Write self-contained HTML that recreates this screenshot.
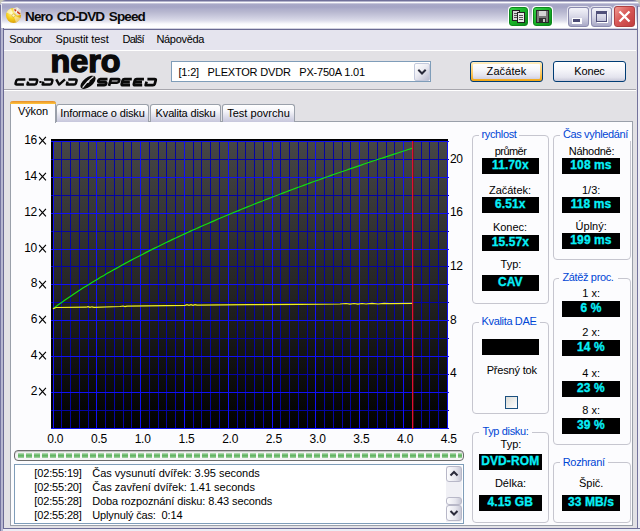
<!DOCTYPE html>
<html>
<head>
<meta charset="utf-8">
<title>Nero CD-DVD Speed</title>
<style>
*{box-sizing:border-box;margin:0;padding:0}
html,body{width:640px;height:531px;overflow:hidden;background:#e2e1e5}
body{font-family:"Liberation Sans",sans-serif;font-size:11px;color:#000;position:relative;letter-spacing:-0.15px}
.abs{position:absolute}
.t{position:absolute;white-space:nowrap}
#win{position:absolute;left:0;top:0;width:640px;height:531px;background:#e2e1e5;overflow:hidden}
/* title bar */
#title{position:absolute;left:0;top:0;width:640px;height:30px;border-radius:6px 7px 0 0;
 background:linear-gradient(to bottom,#70709a 0px,#70709a 1px,#b4b4cc 1px,#b4b4cc 2px,#fafafd 2px,#fafafd 3px,#c6c6da 3px,#c6c6da 4px,#a9a9c8 4px,#a5a5c5 7px,#aeaecb 9px,#b8b8d0 12px,#c8c8dc 16px,#d9d9e8 20px,#e9e9f2 22px,#fbfbfd 24px,#ffffff 27px,#ffffff 28px,#d2d2e0 28px,#d2d2e0 29px,#6a6a92 29px,#6a6a92 30px)}
#tcorner{position:absolute;left:0;top:0;width:640px;height:8px;background:#c4c4b8}
#tl{position:absolute;left:0;top:5px;width:1px;height:24px;background:#70709a}
#tl2{position:absolute;left:1px;top:4px;width:1px;height:24px;background:#ececf4}
#tr{position:absolute;left:637px;top:6px;width:1px;height:24px;background:#74749c}
#tr2{position:absolute;left:638px;top:7px;width:2px;height:24px;background:#ececf4}
#ttext{position:absolute;left:25px;top:9px;font-weight:bold;font-size:13.5px;letter-spacing:-0.85px;word-spacing:1.6px;white-space:nowrap;color:#0a0a0a;line-height:16px}
/* frame borders */
#bl{position:absolute;left:0;top:28px;width:4px;height:503px;background:linear-gradient(to right,#7474a0 0,#7474a0 1px,#b6b6d0 1px,#b6b6d0 3px,#6a6a94 3px,#6a6a94 4px)}
#br{position:absolute;left:637px;top:28px;width:3px;height:503px;background:linear-gradient(to right,#74749c 0,#74749c 1px,#ececf4 1px,#ececf4 3px)}
#bb{position:absolute;left:3px;top:528px;width:637px;height:3px;background:linear-gradient(to bottom,#6e6e98 0,#6e6e98 1px,#ececf4 1px,#ececf4 3px)}
/* menu */
#menu{position:absolute;left:4px;top:30px;width:632px;height:20px;background:#e5e4ee}
#menu span{position:absolute;top:3px;font-size:11px;white-space:nowrap}
#mline{position:absolute;left:4px;top:50px;width:632px;height:1px;background:#fff}
#sep{position:absolute;left:4px;top:89px;width:632px;height:2px;border-top:1px solid #a7a6ad;border-bottom:1px solid #fff}
/* combo */
#combo{position:absolute;left:171px;top:61px;width:260px;height:21px;border:1px solid #7f9db9;background:#fff}
#combo .tx{position:absolute;left:6.5px;top:4px;white-space:pre;letter-spacing:-0.19px}
#drop{position:absolute;left:242px;top:0.5px;width:16px;height:18px;border-radius:2px;border:1px solid #c3c9dc;
 background:linear-gradient(135deg,#ffffff 0,#ececf3 45%,#bcbcd0 100%)}
/* buttons */
.btn{position:absolute;top:61px;width:73px;height:21px;border:1px solid #003c74;border-radius:3px;
 background:linear-gradient(to bottom,#ffffff 0,#f6f6fa 40%,#e4e4ee 80%,#c8c8d8 100%);text-align:center;line-height:19px}
#b1{left:470px;background:linear-gradient(to bottom,#ffefc6 0,#fddc92 25%,#fbc862 60%,#f0a514 100%);letter-spacing:0.1px}
#b1 i{position:absolute;left:2px;top:2px;right:2px;bottom:2px;border-radius:1px;background:linear-gradient(to bottom,#ffffff 0,#f6f6fa 40%,#e2e2ee 80%,#cfcfe2 100%)}
#b1 span{position:relative}
#b2{left:553px}
/* tabs */
.tab{position:absolute;top:104px;height:18px;border:1px solid #9aa0aa;border-bottom:none;border-radius:3px 3px 0 0;
 background:linear-gradient(to bottom,#ffffff 0,#f6f6fa 35%,#dcdce9 70%,#c6c6dc 100%);text-align:center;line-height:16px;white-space:nowrap}
#tab0{top:101px;height:22px;left:10px;width:46px;background:#fcfcfe;border-top:none;line-height:20px;z-index:3}
#tab0:before{content:"";position:absolute;left:-1px;top:0;width:46px;height:3px;border-radius:3px 3px 0 0;background:linear-gradient(to bottom,#e68b2c 0,#ffc73c 100%)}
#pane{position:absolute;left:10px;top:121px;width:623px;height:405px;border:1px solid #9aa0aa;background:#fcfcfe}
/* chart labels */
.yl{text-align:right;font-size:12px;letter-spacing:-0.3px}
.yl .X{font-size:11px;margin-left:1px}
.xl{text-align:center;font-size:12px;letter-spacing:-0.2px}
.rl{font-size:12px;letter-spacing:-0.3px}
/* groups */
.grp{position:absolute;border:1px solid #c6c6cf;border-radius:4px}
.gt{position:absolute;height:13px;background:#fcfcfe;color:#0046d5;text-align:center;white-space:nowrap;line-height:13px;letter-spacing:-0.35px}
.lb{text-align:center;line-height:13px;height:13px}
.bx{position:absolute;height:16px;background:#000;color:#08f0f8;font-weight:bold;font-size:12px;-webkit-text-stroke:0.3px #08f0f8;text-align:center;line-height:15px;letter-spacing:0.1px;white-space:nowrap}
.chk{position:absolute;width:13px;height:13px;border:1px solid #1c5180;background:linear-gradient(135deg,#dcdcd7,#fff)}
/* progress */
#prog{position:absolute;left:14px;top:450px;width:450px;height:11px;border:1px solid #6c6c6c;border-radius:4px;background:#f4f4f4;
 box-shadow:inset 0 1px 1px #c0c0c0}
#prog i{position:absolute;left:3px;top:1.5px;width:444px;height:5.6px;
 background:repeating-linear-gradient(to right,#62b462 0,#62b462 6px,#f4f4f4 6px,#f4f4f4 8px)}
#prog i:after{content:"";position:absolute;left:0;top:0;width:100%;height:100%;background:linear-gradient(to bottom,rgba(255,255,255,.6) 0,rgba(255,255,255,.25) 25%,rgba(255,255,255,0) 45%,rgba(255,255,255,0) 60%,rgba(255,255,255,.45) 100%)}
/* log */
#log{position:absolute;left:14px;top:464px;width:450px;height:60px;border:1px solid #7f9db9;background:#fff}
#log .ln{position:absolute;left:19.3px;white-space:pre;height:14px;line-height:14px}
#log .ln b{font-weight:normal;position:absolute;left:58px}
.sb{position:absolute;left:431px;width:16px;height:16px;border:1px solid #b8b8c8;border-radius:3px;background:linear-gradient(to right,#fdfdfe 0,#e6e6ee 60%,#c8c8d6 100%)}
#sbt{position:absolute;left:431px;top:1px;width:16px;height:56px;background:#f0f0f5}
</style>
</head>
<body>
<div id="win">
 <div id="tcorner"></div><div id="title"></div><div id="tl"></div><div id="tl2"></div><div id="tr"></div><div id="tr2"></div>
 <svg class="abs" style="left:5px;top:6px" width="18" height="18" viewBox="0 0 18 18">
  <defs><radialGradient id="dg" cx="40%" cy="35%" r="70%"><stop offset="0" stop-color="#fff8a0"/><stop offset="0.5" stop-color="#f6d020"/><stop offset="1" stop-color="#d89a08"/></radialGradient></defs>
  <circle cx="8.5" cy="9.5" r="7.5" fill="url(#dg)"/>
  <path d="M8.5 9.5 L1.5 6.5 A7.5 7.5 0 0 1 6 2.4 Z" fill="#fff" opacity=".55"/>
  <path d="M8.5 9.5 L15.6 12 A7.5 7.5 0 0 1 11 16.6 Z" fill="#fff" opacity=".45"/>
  <circle cx="8.5" cy="9.5" r="1.6" fill="#fdf6c8" stroke="#c89010" stroke-width=".5"/>
  <path d="M8 2.5 L12 1 L16 4 L15.5 9 L12 9.5 L9 6 Z" fill="#e8e0d8" opacity=".9"/>
  <path d="M9.5 3.5 L15 8" stroke="#d03010" stroke-width="1.6"/>
  <path d="M13 2 L11 7" stroke="#f4f4f4" stroke-width="1.2"/>
 </svg>
 <div id="ttext">Nero CD-DVD Speed</div>
 <!-- green buttons -->
 <div class="abs" style="left:508px;top:6px;width:21px;height:21px;border-radius:4px;background:#fff"></div>
 <div class="abs" style="left:532px;top:6px;width:21px;height:21px;border-radius:4px;background:#fff"></div>
 <div class="abs" style="left:509px;top:7px;width:19px;height:19px;border-radius:3px;background:linear-gradient(135deg,#38d048 0,#18b028 50%,#0c8c1c 100%);border:1px solid #0c8a1c"></div>
 <div class="abs" style="left:533px;top:7px;width:19px;height:19px;border-radius:3px;background:linear-gradient(135deg,#38d048 0,#18b028 50%,#0c8c1c 100%);border:1px solid #0c8a1c"></div>
 <svg class="abs" style="left:509px;top:7px" width="19" height="19" viewBox="0 0 19 19" shape-rendering="crispEdges">
  <rect x="3.5" y="3.5" width="7" height="10" fill="#d8d8d8" stroke="#202020"/>
  <rect x="5" y="6" width="4" height="1" fill="#555"/><rect x="5" y="8" width="4" height="1" fill="#555"/><rect x="5" y="10" width="4" height="1" fill="#555"/>
  <rect x="8.5" y="5.5" width="7" height="10" fill="#e8e8e8" stroke="#202020"/>
  <rect x="10" y="8" width="4" height="1" fill="#555"/><rect x="10" y="10" width="4" height="1" fill="#555"/><rect x="10" y="12" width="4" height="1" fill="#555"/>
 </svg>
 <svg class="abs" style="left:533px;top:7px" width="19" height="19" viewBox="0 0 19 19" shape-rendering="crispEdges">
  <rect x="3.5" y="3.5" width="12" height="12" fill="#787878" stroke="#282828"/>
  <rect x="6" y="4" width="7" height="5" fill="#d4d4d4"/>
  <rect x="6" y="11" width="7" height="4" fill="#303030"/>
  <rect x="10" y="12" width="2" height="3" fill="#c8c8c8"/>
 </svg>
 <!-- caption buttons -->
 <div class="abs" style="left:568px;top:7px;width:21px;height:20px;border-radius:3px;border:1px solid #8a8aae;background:linear-gradient(to bottom,#f4f4fa 0,#d6d6e6 50%,#a8a8c6 100%);box-shadow:0 0 0 1px rgba(255,255,255,.7)"></div>
 <div class="abs" style="left:572px;top:18px;width:10px;height:6px;background:#fbfbfd"></div><div class="abs" style="left:573px;top:19px;width:7px;height:3px;background:#4a4a74"></div>
 <div class="abs" style="left:591px;top:7px;width:21px;height:20px;border-radius:3px;border:1px solid #8a8aae;background:linear-gradient(to bottom,#f4f4fa 0,#d6d6e6 50%,#a8a8c6 100%);box-shadow:0 0 0 1px rgba(255,255,255,.7)"></div>
 <div class="abs" style="left:596px;top:11px;width:11px;height:11px;border:1px solid #50507a;border-top:3px solid #50507a;box-shadow:1px 1px 0 #fff, inset 0 0 0 0 #fff"></div>
 <div class="abs" style="left:614px;top:6px;width:21px;height:21px;border-radius:3px;border:1px solid #b04040;background:linear-gradient(135deg,#f09a92 0,#d85a58 45%,#c03c3e 100%);box-shadow:0 0 0 1px rgba(255,255,255,.7)"></div>
 <svg class="abs" style="left:614px;top:6px" width="21" height="21" viewBox="0 0 21 21"><path d="M5.5 5.5 L15.5 15.5 M15.5 5.5 L5.5 15.5" stroke="#fff" stroke-width="2.3" stroke-linecap="butt"/></svg>

 <div id="menu">
  <span style="left:5.3px;letter-spacing:-0.5px">Soubor</span>
  <span style="left:51.4px;letter-spacing:-0.1px">Spustit test</span>
  <span style="left:118.4px;letter-spacing:-0.7px">Další</span>
  <span style="left:152.4px;letter-spacing:-0.3px">Nápověda</span>
 </div>
 <div id="mline"></div>

 <!-- nero logo -->
 <svg class="abs" style="left:40px;top:50px" width="100" height="28" viewBox="40 50 100 28"><text x="50.6" y="71.6" font-family="Liberation Sans" font-weight="bold" font-size="31" textLength="70" lengthAdjust="spacingAndGlyphs" fill="#0a0a0a" stroke="#0a0a0a" stroke-width="1.4" letter-spacing="0">nero</text></svg>
 <svg class="abs" style="left:0;top:70px" width="170" height="22" viewBox="0 70 170 22">
<g transform="translate(15.8,78.6) skewX(-16) scale(1.09,0.85)"><path d="M9,1 H2.4 Q1,1 1,2.4 V5.6 Q1,7 2.4,7 H9" fill="none" stroke="#0a0a0a" stroke-width="2.4" stroke-linejoin="round" vector-effect="non-scaling-stroke"/></g>
<g transform="translate(28.0,78.6) skewX(-16) scale(1.09,0.85)"><path d="M1,1 H7.6 Q9,1 9,2.4 V5.6 Q9,7 7.6,7 H1 V3.6" fill="none" stroke="#0a0a0a" stroke-width="2.4" stroke-linejoin="round" vector-effect="non-scaling-stroke"/></g>
<rect x="39.4" y="81.0" width="2.2" height="2" fill="#0a0a0a"/>
<g transform="translate(43.2,78.6) skewX(-16) scale(1.09,0.85)"><path d="M1,1 H7.6 Q9,1 9,2.4 V5.6 Q9,7 7.6,7 H1 V3.6" fill="none" stroke="#0a0a0a" stroke-width="2.4" stroke-linejoin="round" vector-effect="non-scaling-stroke"/></g>
<g transform="translate(55.400000000000006,78.6) skewX(-16) scale(1.09,0.85)"><path d="M1,1 L5,7 L9,1" fill="none" stroke="#0a0a0a" stroke-width="2.4" stroke-linejoin="round" vector-effect="non-scaling-stroke"/></g>
<g transform="translate(67.4,78.6) skewX(-16) scale(1.09,0.85)"><path d="M1,1 H7.6 Q9,1 9,2.4 V5.6 Q9,7 7.6,7 H1 V3.6" fill="none" stroke="#0a0a0a" stroke-width="2.4" stroke-linejoin="round" vector-effect="non-scaling-stroke"/></g>
<g transform="translate(88,82.3) rotate(-38)"><ellipse cx="0" cy="0" rx="9" ry="4.6" fill="#0a0a0a"/><path d="M-7.5,0.8 Q0,-1.6 8,-1.2" stroke="#e2e1e5" stroke-width="1.3" fill="none"/><ellipse cx="0.5" cy="-0.2" rx="1.6" ry="0.9" fill="#e2e1e5"/></g>
<g transform="translate(98.0,78.0) skewX(-16) scale(1.09,1.03)"><path d="M9,1 H2.4 Q1,1 1,2.5 Q1,4 2.4,4 H7.6 Q9,4 9,5.5 Q9,7 7.6,7 H1" fill="none" stroke="#0a0a0a" stroke-width="2.7" stroke-linejoin="round" vector-effect="non-scaling-stroke"/></g>
<g transform="translate(110.15,78.0) skewX(-16) scale(1.09,1.03)"><path d="M1,7.6 V1 H7.6 Q9,1 9,2.8 Q9,4.6 7.6,4.6 H2" fill="none" stroke="#0a0a0a" stroke-width="2.7" stroke-linejoin="round" vector-effect="non-scaling-stroke"/></g>
<g transform="translate(122.30000000000001,78.0) skewX(-16) scale(1.09,1.03)"><path d="M9,1 H2.4 Q1,1 1,2.4 V5.6 Q1,7 2.4,7 H9 M2,4 H8" fill="none" stroke="#0a0a0a" stroke-width="2.7" stroke-linejoin="round" vector-effect="non-scaling-stroke"/></g>
<g transform="translate(134.45000000000002,78.0) skewX(-16) scale(1.09,1.03)"><path d="M9,1 H2.4 Q1,1 1,2.4 V5.6 Q1,7 2.4,7 H9 M2,4 H8" fill="none" stroke="#0a0a0a" stroke-width="2.7" stroke-linejoin="round" vector-effect="non-scaling-stroke"/></g>
<g transform="translate(146.60000000000002,78.0) skewX(-16) scale(1.09,1.03)"><path d="M1,1 H7.6 Q9,1 9,2.4 V5.6 Q9,7 7.6,7 H1 V3.6" fill="none" stroke="#0a0a0a" stroke-width="2.7" stroke-linejoin="round" vector-effect="non-scaling-stroke"/></g>
</svg>
 <div id="sep"></div>

 <div id="combo"><div class="tx">[1:2]   PLEXTOR DVDR   PX-750A 1.01</div>
  <div id="drop"><svg width="14" height="16" viewBox="0 0 14 16" style="position:absolute;left:0;top:0"><path d="M3.3 5.8 L7 9.5 L10.7 5.8" fill="none" stroke="#2a2a3a" stroke-width="2"/></svg></div>
 </div>
 <div class="btn" id="b1"><i></i><span>Začátek</span></div>
 <div class="btn" id="b2">Konec</div>

 <div id="pane"></div>
 <div class="tab" id="tab0">Výkon</div>
 <div class="tab" style="left:56px;width:93px">Informace o disku</div>
 <div class="tab" style="left:150px;width:71px">Kvalita disku</div>
 <div class="tab" style="left:222px;width:73px;letter-spacing:0.02px">Test povrchu</div>

 <svg class="abs" style="left:0;top:0" width="640" height="531" viewBox="0 0 640 531" shape-rendering="crispEdges">
<defs><linearGradient id="cg" x1="0" y1="0" x2="0" y2="1"><stop offset="0" stop-color="#464646"/><stop offset="0.5" stop-color="#262626"/><stop offset="0.85" stop-color="#0b0b0b"/><stop offset="1" stop-color="#000"/></linearGradient></defs>
<rect x="51" y="139" width="397" height="290" fill="#000"/>
<rect x="53" y="141" width="394" height="288" fill="url(#cg)"/>
<rect x="61" y="141" width="1" height="288" fill="#0404a4"/>
<rect x="70" y="141" width="1" height="288" fill="#0404a4"/>
<rect x="79" y="141" width="1" height="288" fill="#0404a4"/>
<rect x="88" y="141" width="1" height="288" fill="#0404a4"/>
<rect x="105" y="141" width="1" height="288" fill="#0404a4"/>
<rect x="114" y="141" width="1" height="288" fill="#0404a4"/>
<rect x="123" y="141" width="1" height="288" fill="#0404a4"/>
<rect x="131" y="141" width="1" height="288" fill="#0404a4"/>
<rect x="149" y="141" width="1" height="288" fill="#0404a4"/>
<rect x="158" y="141" width="1" height="288" fill="#0404a4"/>
<rect x="166" y="141" width="1" height="288" fill="#0404a4"/>
<rect x="175" y="141" width="1" height="288" fill="#0404a4"/>
<rect x="193" y="141" width="1" height="288" fill="#0404a4"/>
<rect x="201" y="141" width="1" height="288" fill="#0404a4"/>
<rect x="210" y="141" width="1" height="288" fill="#0404a4"/>
<rect x="219" y="141" width="1" height="288" fill="#0404a4"/>
<rect x="237" y="141" width="1" height="288" fill="#0404a4"/>
<rect x="245" y="141" width="1" height="288" fill="#0404a4"/>
<rect x="254" y="141" width="1" height="288" fill="#0404a4"/>
<rect x="263" y="141" width="1" height="288" fill="#0404a4"/>
<rect x="280" y="141" width="1" height="288" fill="#0404a4"/>
<rect x="289" y="141" width="1" height="288" fill="#0404a4"/>
<rect x="298" y="141" width="1" height="288" fill="#0404a4"/>
<rect x="307" y="141" width="1" height="288" fill="#0404a4"/>
<rect x="324" y="141" width="1" height="288" fill="#0404a4"/>
<rect x="333" y="141" width="1" height="288" fill="#0404a4"/>
<rect x="342" y="141" width="1" height="288" fill="#0404a4"/>
<rect x="350" y="141" width="1" height="288" fill="#0404a4"/>
<rect x="368" y="141" width="1" height="288" fill="#0404a4"/>
<rect x="377" y="141" width="1" height="288" fill="#0404a4"/>
<rect x="386" y="141" width="1" height="288" fill="#0404a4"/>
<rect x="394" y="141" width="1" height="288" fill="#0404a4"/>
<rect x="412" y="141" width="1" height="288" fill="#0404a4"/>
<rect x="421" y="141" width="1" height="288" fill="#0404a4"/>
<rect x="429" y="141" width="1" height="288" fill="#0404a4"/>
<rect x="438" y="141" width="1" height="288" fill="#0404a4"/>
<rect x="51" y="159" width="398" height="1" fill="#0404a4"/>
<rect x="51" y="195" width="398" height="1" fill="#0404a4"/>
<rect x="51" y="231" width="398" height="1" fill="#0404a4"/>
<rect x="51" y="266" width="398" height="1" fill="#0404a4"/>
<rect x="51" y="302" width="398" height="1" fill="#0404a4"/>
<rect x="51" y="338" width="398" height="1" fill="#0404a4"/>
<rect x="51" y="374" width="398" height="1" fill="#0404a4"/>
<rect x="51" y="410" width="398" height="1" fill="#0404a4"/>
<rect x="53" y="141" width="1" height="288" fill="#1010f8"/>
<rect x="96" y="141" width="1" height="288" fill="#1010f8"/>
<rect x="140" y="141" width="1" height="288" fill="#1010f8"/>
<rect x="184" y="141" width="1" height="288" fill="#1010f8"/>
<rect x="228" y="141" width="1" height="288" fill="#1010f8"/>
<rect x="272" y="141" width="1" height="288" fill="#1010f8"/>
<rect x="315" y="141" width="1" height="288" fill="#1010f8"/>
<rect x="359" y="141" width="1" height="288" fill="#1010f8"/>
<rect x="403" y="141" width="1" height="288" fill="#1010f8"/>
<rect x="447" y="141" width="1" height="288" fill="#1010f8"/>
<rect x="51" y="141" width="398" height="1" fill="#1010f8"/>
<rect x="51" y="177" width="398" height="1" fill="#1010f8"/>
<rect x="51" y="213" width="398" height="1" fill="#1010f8"/>
<rect x="51" y="249" width="398" height="1" fill="#1010f8"/>
<rect x="51" y="284" width="398" height="1" fill="#1010f8"/>
<rect x="51" y="320" width="398" height="1" fill="#1010f8"/>
<rect x="51" y="356" width="398" height="1" fill="#1010f8"/>
<rect x="51" y="392" width="398" height="1" fill="#1010f8"/>
<rect x="51" y="428" width="398" height="1" fill="#1010f8"/>
<polyline shape-rendering="auto" fill="none" stroke="#10e010" stroke-width="1.2" points="53.0,308.7 56.0,306.5 59.0,304.3 62.0,302.2 65.0,300.1 68.0,298.0 71.0,296.0 73.9,294.0 76.9,292.0 79.9,290.1 82.9,288.1 85.9,286.3 88.9,284.4 91.9,282.5 94.9,280.7 97.9,278.9 100.9,277.1 103.9,275.4 106.8,273.6 109.8,271.9 112.8,270.2 115.8,268.6 118.8,266.9 121.8,265.2 124.8,263.6 127.8,262.0 130.8,260.4 133.8,258.8 136.8,257.2 139.8,255.7 142.8,254.2 145.7,252.6 148.7,251.1 151.7,249.6 154.7,248.1 157.7,246.7 160.7,245.2 163.7,243.7 166.7,242.3 169.7,240.9 172.7,239.4 175.7,238.0 178.7,236.6 181.6,235.3 184.6,233.9 187.6,232.5 190.6,231.1 193.6,229.8 196.6,228.5 199.6,227.1 202.6,225.8 205.6,224.5 208.6,223.2 211.6,221.9 214.6,220.6 217.5,219.3 220.5,218.0 223.5,216.8 226.5,215.5 229.5,214.3 232.5,213.0 235.5,211.8 238.5,210.6 241.5,209.3 244.5,208.1 247.5,206.9 250.4,205.7 253.4,204.5 256.4,203.3 259.4,202.1 262.4,201.0 265.4,199.8 268.4,198.6 271.4,197.5 274.4,196.3 277.4,195.2 280.4,194.0 283.4,192.9 286.4,191.8 289.3,190.6 292.3,189.5 295.3,188.4 298.3,187.3 301.3,186.2 304.3,185.1 307.3,184.0 310.3,182.9 313.3,181.8 316.3,180.7 319.3,179.7 322.2,178.6 325.2,177.5 328.2,176.5 331.2,175.4 334.2,174.3 337.2,173.3 340.2,172.3 343.2,171.2 346.2,170.2 349.2,169.1 352.2,168.1 355.2,167.1 358.1,166.1 361.1,165.1 364.1,164.0 367.1,163.0 370.1,162.0 373.1,161.0 376.1,160.0 379.1,159.0 382.1,158.1 385.1,157.1 388.1,156.1 391.1,155.1 394.1,154.1 397.0,153.2 400.0,152.2 403.0,151.2 406.0,150.3 409.0,149.3 412.0,148.4"/>
<polyline shape-rendering="auto" fill="none" stroke="#f0f020" stroke-width="1.2" points="53,308.7 56,307.5 86,307.2 88,306.6 90,307.4 92,306.8 94,307.3 120,306.5 123,306.0 125,306.6 127,306.1 185,305.3 187,304.7 189,305.3 191,304.7 193,305.3 195,304.7 197,305.2 250,304.7 300,304.3 340,304.0 346,303.5 350,304.2 354,303.5 358,304.2 362,303.5 366,304.0 372,303.4 378,304.0 384,303.4 390,303.6 412,303.4"/>
<rect x="412" y="141" width="1" height="288" fill="#e01030"/>
<rect x="413" y="141" width="1" height="288" fill="#800818" opacity="0.6"/>
</svg>
 <div class="t yl" style="left:10px;top:133px;width:27px">16</div><svg class="abs" style="left:38px;top:136px" width="10" height="10" viewBox="0 0 10 10"><path d="M1.1,0.8 L7.9,8.4 M7.9,0.8 L1.1,8.4" stroke="#000" stroke-width="1.15" fill="none"/></svg>
<div class="t yl" style="left:10px;top:169px;width:27px">14</div><svg class="abs" style="left:38px;top:172px" width="10" height="10" viewBox="0 0 10 10"><path d="M1.1,0.8 L7.9,8.4 M7.9,0.8 L1.1,8.4" stroke="#000" stroke-width="1.15" fill="none"/></svg>
<div class="t yl" style="left:10px;top:205px;width:27px">12</div><svg class="abs" style="left:38px;top:208px" width="10" height="10" viewBox="0 0 10 10"><path d="M1.1,0.8 L7.9,8.4 M7.9,0.8 L1.1,8.4" stroke="#000" stroke-width="1.15" fill="none"/></svg>
<div class="t yl" style="left:10px;top:241px;width:27px">10</div><svg class="abs" style="left:38px;top:244px" width="10" height="10" viewBox="0 0 10 10"><path d="M1.1,0.8 L7.9,8.4 M7.9,0.8 L1.1,8.4" stroke="#000" stroke-width="1.15" fill="none"/></svg>
<div class="t yl" style="left:10px;top:276px;width:27px">8</div><svg class="abs" style="left:38px;top:280px" width="10" height="10" viewBox="0 0 10 10"><path d="M1.1,0.8 L7.9,8.4 M7.9,0.8 L1.1,8.4" stroke="#000" stroke-width="1.15" fill="none"/></svg>
<div class="t yl" style="left:10px;top:312px;width:27px">6</div><svg class="abs" style="left:38px;top:315px" width="10" height="10" viewBox="0 0 10 10"><path d="M1.1,0.8 L7.9,8.4 M7.9,0.8 L1.1,8.4" stroke="#000" stroke-width="1.15" fill="none"/></svg>
<div class="t yl" style="left:10px;top:348px;width:27px">4</div><svg class="abs" style="left:38px;top:351px" width="10" height="10" viewBox="0 0 10 10"><path d="M1.1,0.8 L7.9,8.4 M7.9,0.8 L1.1,8.4" stroke="#000" stroke-width="1.15" fill="none"/></svg>
<div class="t yl" style="left:10px;top:384px;width:27px">2</div><svg class="abs" style="left:38px;top:387px" width="10" height="10" viewBox="0 0 10 10"><path d="M1.1,0.8 L7.9,8.4 M7.9,0.8 L1.1,8.4" stroke="#000" stroke-width="1.15" fill="none"/></svg>
<div class="t xl" style="left:40.3px;top:432px;width:30px">0.0</div>
<div class="t xl" style="left:84.0px;top:432px;width:30px">0.5</div>
<div class="t xl" style="left:127.7px;top:432px;width:30px">1.0</div>
<div class="t xl" style="left:171.5px;top:432px;width:30px">1.5</div>
<div class="t xl" style="left:215.2px;top:432px;width:30px">2.0</div>
<div class="t xl" style="left:258.9px;top:432px;width:30px">2.5</div>
<div class="t xl" style="left:302.6px;top:432px;width:30px">3.0</div>
<div class="t xl" style="left:346.4px;top:432px;width:30px">3.5</div>
<div class="t xl" style="left:390.1px;top:432px;width:30px">4.0</div>
<div class="t xl" style="left:433.8px;top:432px;width:30px">4.5</div>
<div class="t rl" style="left:450px;top:152px">20</div>
<div class="t rl" style="left:450px;top:205px">16</div>
<div class="t rl" style="left:450px;top:259px">12</div>
<div class="t rl" style="left:450px;top:313px">8</div>
<div class="t rl" style="left:450px;top:366px">4</div>
 <div class="grp" style="left:472px;top:134.5px;width:77px;height:169px"></div><div class="gt" style="left:479px;top:128.3px;width:40px">rychlost</div>
<div class="t lb" style="left:470.5px;top:144.7px;width:80px;letter-spacing:-0.55px">průměr</div>
<div class="bx" style="left:481.5px;top:158px;width:57.7px">11.70x</div>
<div class="t lb" style="left:470.0px;top:183.7px;width:80px;letter-spacing:0px">Začátek:</div>
<div class="bx" style="left:481.5px;top:197px;width:57.7px">6.51x</div>
<div class="t lb" style="left:470.0px;top:221.1px;width:80px;letter-spacing:0px">Konec:</div>
<div class="bx" style="left:481.5px;top:235px;width:57.7px">15.57x</div>
<div class="t lb" style="left:471.0px;top:258.1px;width:80px;letter-spacing:0px">Typ:</div>
<div class="bx" style="left:481.5px;top:275px;width:57.7px">CAV</div>
<div class="grp" style="left:553px;top:134.5px;width:77.5px;height:125px"></div><div class="gt" style="left:559.7px;top:128.3px;width:71.6px">Čas vyhledání</div>
<div class="t lb" style="left:551.5px;top:144.7px;width:80px;letter-spacing:-0.3px">Náhodně:</div>
<div class="bx" style="left:562.2px;top:158px;width:57.6px">108 ms</div>
<div class="t lb" style="left:551.2px;top:183.7px;width:80px;letter-spacing:0px">1/3:</div>
<div class="bx" style="left:562.2px;top:197px;width:57.6px">118 ms</div>
<div class="t lb" style="left:551.2px;top:219.5px;width:80px;letter-spacing:0px">Úplný:</div>
<div class="bx" style="left:562.2px;top:233px;width:57.6px">199 ms</div>
<div class="grp" style="left:553px;top:277.5px;width:77.5px;height:167px"></div><div class="gt" style="left:558.5px;top:271.3px;width:59px">Zátěž proc.</div>
<div class="t lb" style="left:551.2px;top:287.2px;width:80px;letter-spacing:0px">1 x:</div>
<div class="bx" style="left:562.2px;top:301px;width:57.6px">6 %</div>
<div class="t lb" style="left:551.2px;top:326.4px;width:80px;letter-spacing:0px">2 x:</div>
<div class="bx" style="left:562.2px;top:340px;width:57.6px">14 %</div>
<div class="t lb" style="left:551.2px;top:367.4px;width:80px;letter-spacing:0px">4 x:</div>
<div class="bx" style="left:562.2px;top:381px;width:57.6px">23 %</div>
<div class="t lb" style="left:551.2px;top:404.4px;width:80px;letter-spacing:0px">8 x:</div>
<div class="bx" style="left:562.2px;top:418px;width:57.6px">39 %</div>
<div class="grp" style="left:472px;top:321.5px;width:77px;height:92px"></div><div class="gt" style="left:478.5px;top:315.3px;width:61px">Kvalita DAE</div>
<div class="bx" style="left:481.5px;top:339px;width:57.7px"></div>
<div class="t lb" style="left:471.8px;top:364.1px;width:80px;letter-spacing:-0.18px">Přesný tok</div>
<div class="chk" style="left:505px;top:396px"></div>
<div class="grp" style="left:472px;top:431.5px;width:77px;height:91.5px"></div><div class="gt" style="left:479.2px;top:425.3px;width:52.5px">Typ disku:</div>
<div class="t lb" style="left:471.0px;top:438.0px;width:80px;letter-spacing:0px">Typ:</div>
<div class="bx" style="left:478.5px;top:454px;width:63.5px">DVD-ROM</div>
<div class="t lb" style="left:470.5px;top:477.3px;width:80px;letter-spacing:0px">Délka:</div>
<div class="bx" style="left:478.5px;top:495px;width:63.5px">4.15 GB</div>
<div class="grp" style="left:553px;top:462px;width:77.5px;height:60.5px"></div><div class="gt" style="left:559.7px;top:455.8px;width:48px">Rozhraní</div>
<div class="t lb" style="left:551.2px;top:477.3px;width:80px;letter-spacing:0px">Špič.</div>
<div class="bx" style="left:562.2px;top:495px;width:57.6px">33 MB/s</div>

 <div id="prog"><i></i></div>
 <div id="log">
  <div class="ln" style="top:1px">[02:55:19]<b style="letter-spacing:-0.02px">Čas vysunutí dvířek: 3.95 seconds</b></div>
  <div class="ln" style="top:15px">[02:55:20]<b style="letter-spacing:-0.02px">Čas zavření dvířek: 1.41 seconds</b></div>
  <div class="ln" style="top:29px">[02:55:28]<b style="letter-spacing:-0.12px">Doba rozpoznání disku: 8.43 seconds</b></div>
  <div class="ln" style="top:43px">[02:55:28]<b>Uplynulý čas:  0:14</b></div>
  <div id="sbt"></div>
  <div class="sb" style="top:1px"><svg width="14" height="14" viewBox="0.5 0 14 14" style="position:absolute;left:0;top:0"><path d="M4 8.5 L7.5 5 L11 8.5" fill="none" stroke="#2a2a3a" stroke-width="2"/></svg></div>
  <div class="sb" style="top:32px;height:8px"></div>
  <div class="sb" style="top:40px"><svg width="14" height="14" viewBox="0.5 0 14 14" style="position:absolute;left:0;top:0"><path d="M4 5 L7.5 8.5 L11 5" fill="none" stroke="#2a2a3a" stroke-width="2"/></svg></div>
 </div>

 <div id="bl"></div><div id="br"></div><div id="bb"></div>
</div>
</body>
</html>
